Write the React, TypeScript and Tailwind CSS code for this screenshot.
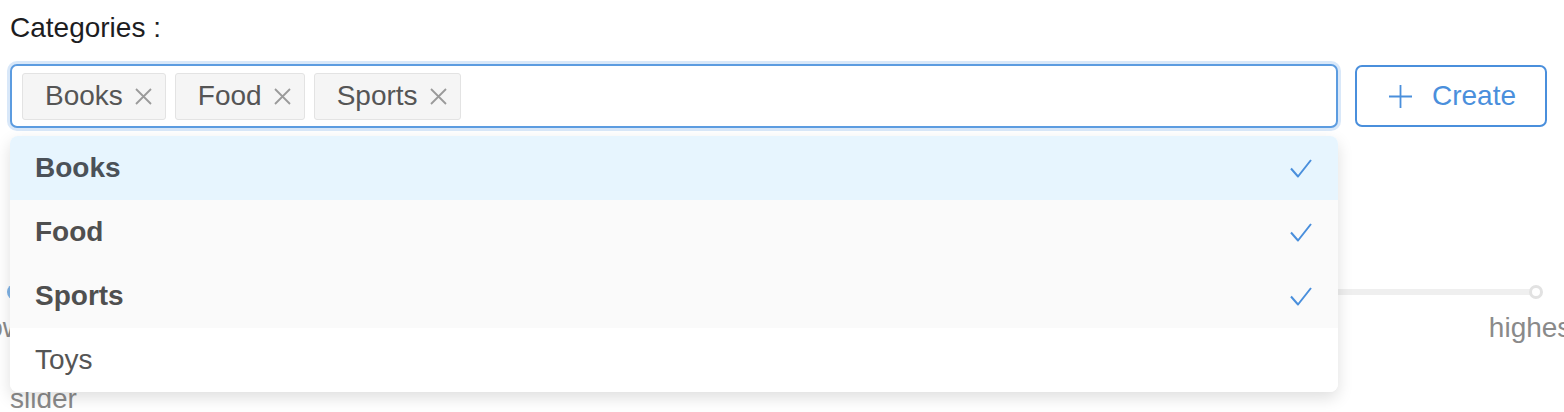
const tags = ["Books", "Food", "Sports"];

const options = [
  { label: "Books", selected: true, active: true },
  { label: "Food", selected: true, active: false },
  { label: "Sports", selected: true, active: false },
  { label: "Toys", selected: false, active: false },
];

function Cross() {
  return (
    <svg width="17" height="17" viewBox="0 0 17 17" className="shrink-0" aria-hidden="true">
      <path d="M1 1 16 16M16 1 1 16" stroke="#9a9a9a" strokeWidth="1.8" fill="none" />
    </svg>
  );
}

function PlusMark() {
  return (
    <svg width="23" height="23" viewBox="0 0 23 23" className="shrink-0" aria-hidden="true">
      <path d="M11.5 0v23M0 11.5h23" stroke="#4a8fdc" strokeWidth="1.8" fill="none" />
    </svg>
  );
}

function Tick() {
  return (
    <svg width="22" height="19" viewBox="0 0 22 19" className="shrink-0" aria-hidden="true">
      <path d="M1 9.5 8 17.5 21 1" stroke="#4a8fdc" strokeWidth="2" fill="none" strokeLinejoin="round" />
    </svg>
  );
}

export default function App() {
  return (
    <div className="relative h-[412px] w-[1564px] overflow-hidden bg-white pl-[10px] font-['Liberation_Sans',Arial,sans-serif]">
      <div className="pt-[12px] text-[28px] leading-[32px] text-[#1d1d1f]">Categories :</div>

      <div className="mt-[20px] flex items-center gap-[17px] pr-[17px]">
        <div className="flex h-[64px] flex-1 items-center gap-[9px] rounded-[7px] border-2 border-[#5c9ce0] bg-white px-[10px] shadow-[0_0_0_3px_#d9e8f9]">
          {tags.map((t) => (
            <span
              key={t}
              className="flex h-[47px] items-center gap-[12px] rounded-[3px] border border-[#e3e3e3] bg-[#f5f5f5] pl-[22px] pr-[13px] text-[28px] leading-none text-[#555]"
            >
              {t}
              <Cross />
            </span>
          ))}
        </div>
        <button className="flex h-[62px] w-[192px] items-center gap-[20px] rounded-[7px] border-2 border-[#4a8fdc] bg-white pl-[32px] text-[28px] leading-none text-[#4a8fdc]">
          <PlusMark />
          Create
        </button>
      </div>

      {/* slider sitting behind the open menu */}
      <div className="relative ml-[5px] mt-[156px] flex h-[16px] w-[1521px] items-center">
        <div className="h-[6px] w-full rounded-full bg-[#efefef]" />
        <span className="absolute left-[-8px] top-0 size-[16px] rounded-full bg-[#7fb3e6]" />
        <span className="absolute right-[-7px] top-[1px] size-[14px] rounded-full border-[3px] border-[#e2e2e2] bg-white" />
      </div>
      <div className="mt-[12px] flex h-[32px] justify-between text-[28px] leading-[32px] text-[#8a8a8a]">
        <div className="ml-[-8px] flex w-0 justify-center whitespace-nowrap">low</div>
        <div className="mr-[30px] flex w-0 justify-center whitespace-nowrap">highest</div>
      </div>
      <div className="mt-[39px] text-[28px] leading-[32px] text-[#8a8a8a]">slider</div>

      <ul className="absolute left-[10px] top-[136px] w-[1328px] overflow-hidden rounded-[8px] bg-white shadow-[0_6px_16px_rgba(0,0,0,0.13)]">
        {options.map((o) => (
          <li
            key={o.label}
            className={
              "flex h-[64px] items-center justify-between pl-[25px] pr-[26px] text-[28px] leading-none " +
              (o.active
                ? "bg-[#e7f5fe] font-bold text-[#4b5158]"
                : o.selected
                  ? "bg-[#fafafa] font-bold text-[#4f4f4f]"
                  : "bg-white text-[#555]")
            }
          >
            {o.label}
            {o.selected && <Tick />}
          </li>
        ))}
      </ul>
    </div>
  );
}
